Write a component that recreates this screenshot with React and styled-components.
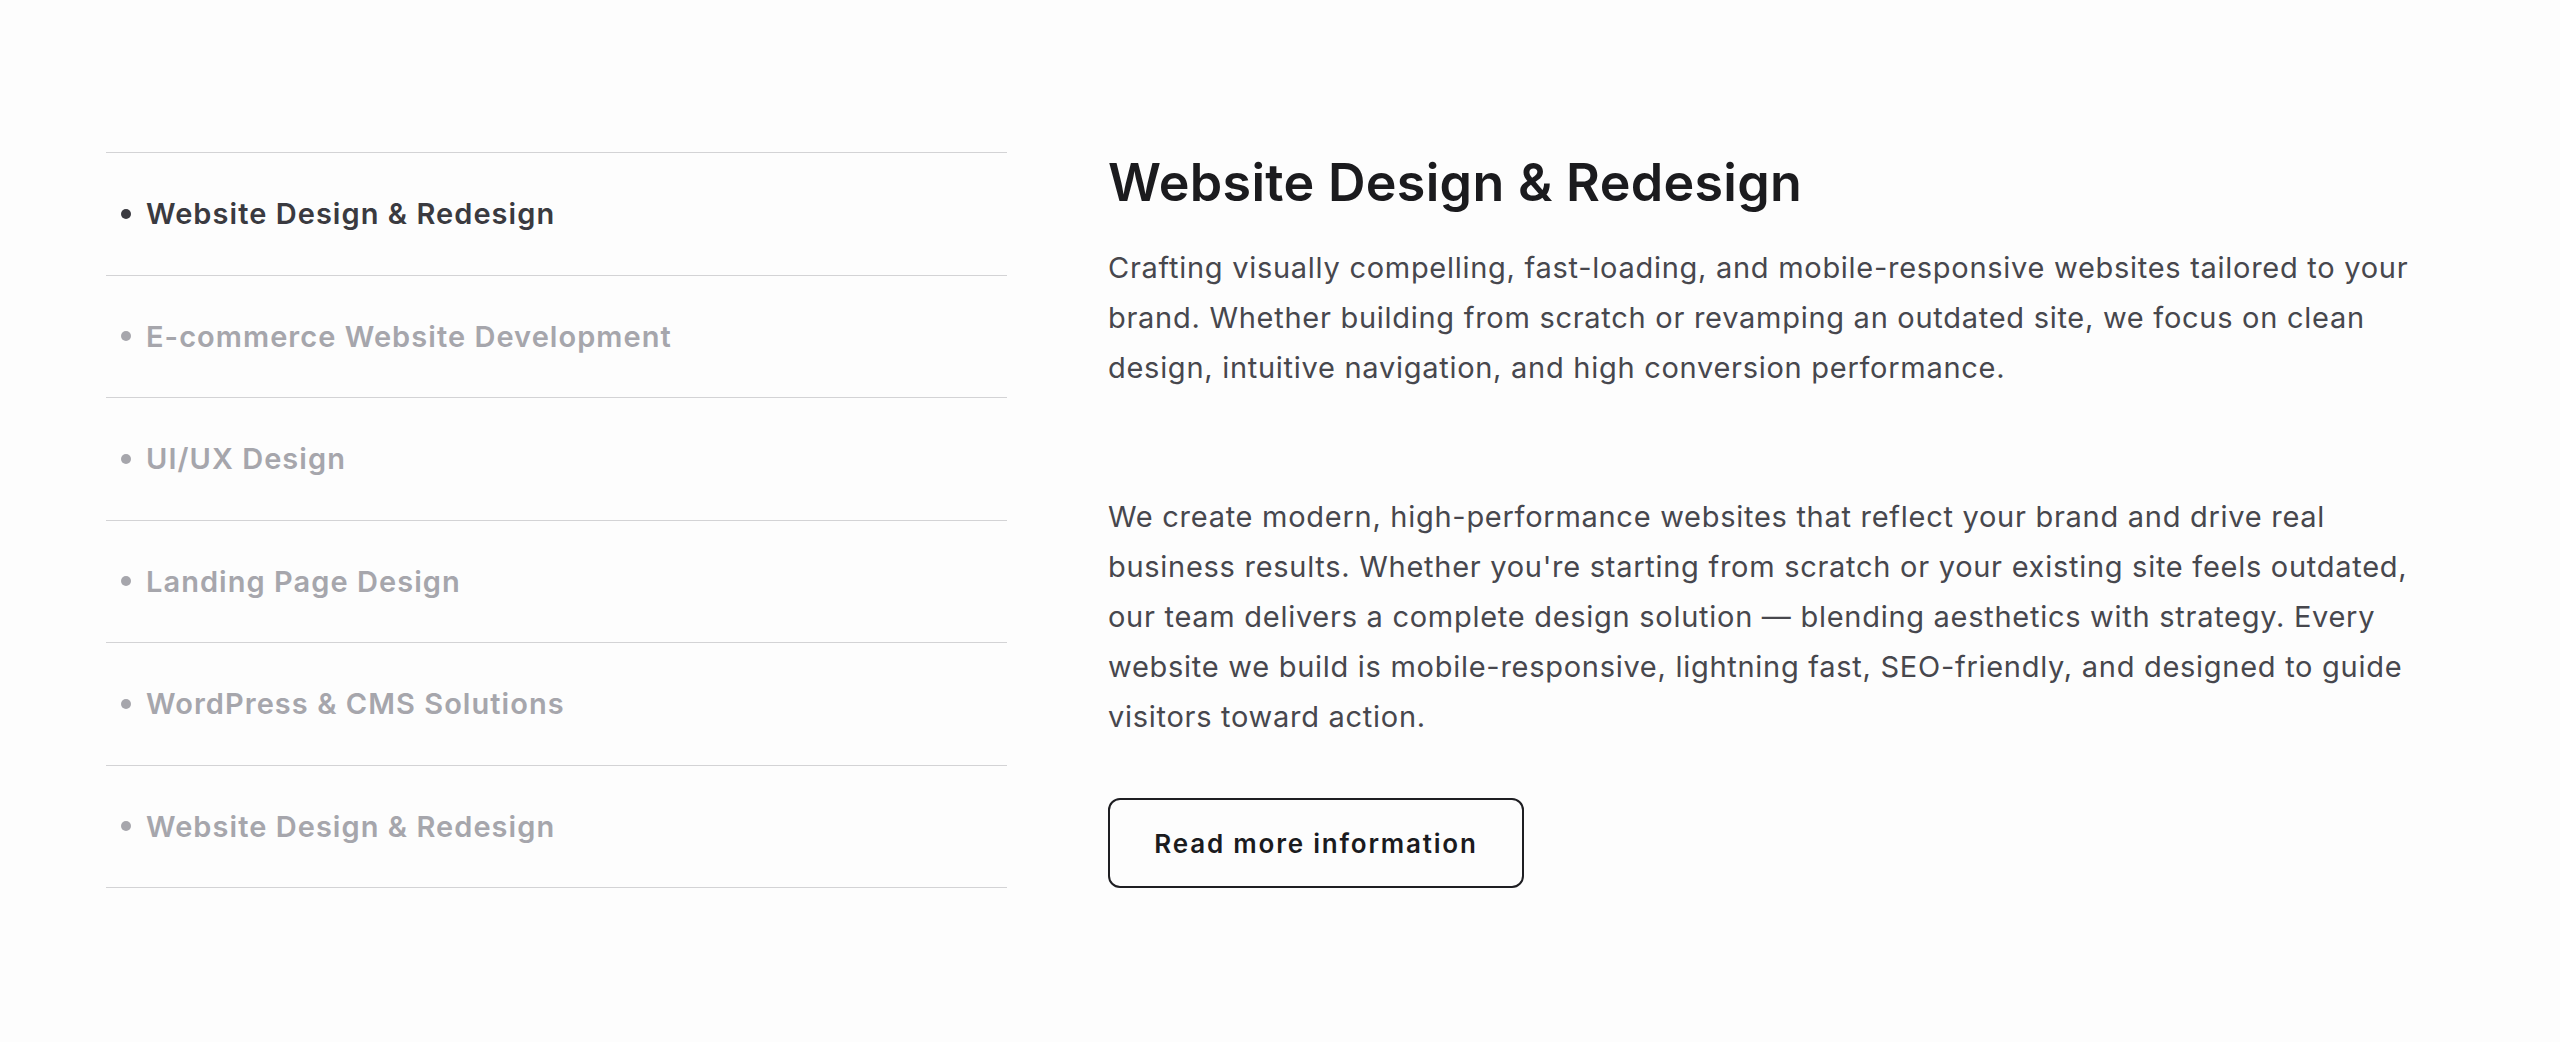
import React from "react";
import styled, { createGlobalStyle } from "styled-components";

const Global = createGlobalStyle`
  * { box-sizing: border-box; }
  html, body { margin: 0; padding: 0; background: #fdfdfd; }
  body { font-family: Inter, "Noto Sans", sans-serif; -webkit-font-smoothing: antialiased; }
`;

const Section = styled.section`
  display: grid;
  grid-template-columns: 901px 1320px;
  column-gap: 101px;
  padding: 152px 106px 0;
  min-height: 1042px;
  align-items: start;
`;

const List = styled.ul`
  list-style: none;
  margin: 0;
  padding: 0;
  border-top: 1px solid #d3d3d5;
`;

const Item = styled.li`
  display: flex;
  align-items: center;
  gap: 15px;
  height: 122.5px;
  padding-left: 15px;
  border-bottom: 1px solid #d3d3d5;
  font-size: 29px;
  font-weight: 600;
  letter-spacing: 1.05px;
  color: ${(p) => (p.$active ? "#3a3a40" : "#a6a6ac")};
  cursor: pointer;
`;

const Dot = styled.span`
  width: 10px;
  height: 10px;
  border-radius: 50%;
  background: currentColor;
  flex: none;
`;

const Content = styled.div`
  display: flex;
  flex-direction: column;
  align-items: flex-start;
`;

const Title = styled.h2`
  margin: 0;
  font-size: 52px;
  line-height: 62px;
  font-weight: 600;
  letter-spacing: 0.3px;
  color: #1b1b1e;
`;

const Text = styled.p`
  margin: ${(p) => p.$mt}px 0 0;
  font-size: 29px;
  line-height: 50px;
  font-weight: 400;
  letter-spacing: 0.72px;
  color: #47474d;
`;

const Button = styled.button`
  margin-top: 56px;
  width: 416px;
  height: 90px;
  border: 2px solid #1e1e22;
  border-radius: 12px;
  background: transparent;
  font-family: inherit;
  font-size: 26px;
  font-weight: 600;
  letter-spacing: 1.8px;
  color: #1b1b1e;
  cursor: pointer;
`;

const items = [
  "Website Design & Redesign",
  "E-commerce Website Development",
  "UI/UX Design",
  "Landing Page Design",
  "WordPress & CMS Solutions",
  "Website Design & Redesign",
];

export default function App() {
  return (
    <>
      <Global />
      <Section>
        <List>
          {items.map((t, i) => (
            <Item key={i} $active={i === 0}>
              <Dot />
              {t}
            </Item>
          ))}
        </List>
        <Content>
          <Title>Website Design &amp; Redesign</Title>
          <Text $mt={29}>
            Crafting visually compelling, fast-loading, and mobile-responsive websites tailored to your
            brand. Whether building from scratch or revamping an outdated site, we focus on clean
            design, intuitive navigation, and high conversion performance.
          </Text>
          <Text $mt={99}>
            We create modern, high-performance websites that reflect your brand and drive real
            business results. Whether you're starting from scratch or your existing site feels
            outdated, our team delivers a complete design solution — blending aesthetics with
            strategy. Every website we build is mobile-responsive, lightning fast, SEO-friendly, and
            designed to guide visitors toward action.
          </Text>
          <Button>Read more information</Button>
        </Content>
      </Section>
    </>
  );
}
